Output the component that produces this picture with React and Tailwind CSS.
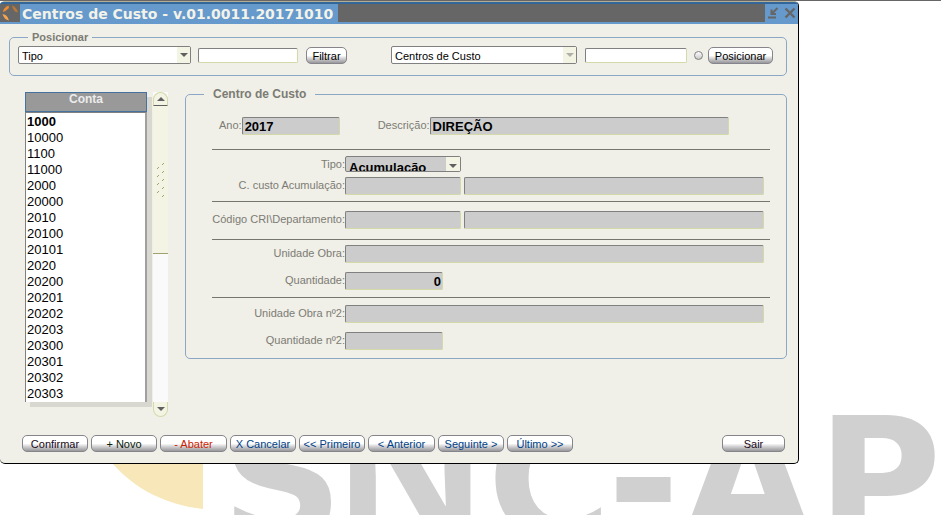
import React from "react";

const accounts = [
  "1000", "10000", "1100", "11000", "2000", "20000", "2010", "20100", "20101",
  "2020", "20200", "20201", "20202", "20203", "20300", "20301", "20302", "20303",
];

const actions = [
  { label: "Confirmar", style: "w-[66px] text-[#1a0a1a]" },
  { label: "+ Novo", style: "w-[66px] text-[#0a200a]" },
  { label: "- Abater", style: "w-[67px] text-[#cc2200]" },
  { label: "X Cancelar", style: "w-[66px] text-[#003f87]" },
  { label: "<< Primeiro", style: "w-[66px] text-[#003f87]" },
  { label: "< Anterior", style: "w-[67px] text-[#003f87]" },
  { label: "Seguinte >", style: "w-[66px] text-[#003f87]" },
  { label: "Último >>", style: "w-[66px] text-[#003f87]" },
];

function Watermark() {
  return (
    <svg
      className="absolute left-0 top-0"
      width="941"
      height="515"
      viewBox="0 0 941 515"
      aria-hidden="true"
    >
      <path d="M203 400V508C166 504 135 488 113 463L90 400Z" fill="#f8e7b9" />
      <g
        fill="#d0d0d0"
        fontFamily="'DejaVu Sans', sans-serif"
        fontWeight="700"
        fontSize="170"
      >
        <text x="221" y="539">S</text>
        <text x="333" y="539" fontFamily="'Open Sans', sans-serif" fontSize="190">N</text>
        <text x="487" y="539">C</text>
        <text x="607" y="539" fontSize="176">-</text>
        <text x="682" y="539">A</text>
        <text x="817" y="538">P</text>
      </g>
    </svg>
  );
}

function Button({ children, className = "" }) {
  return (
    <button
      type="button"
      className={`flex h-[17px] shrink-0 items-center justify-center whitespace-nowrap rounded-[5px] border border-[#85858b] bg-linear-to-b from-white from-50% via-[#d2d2d4] via-70% to-[#98989c] pt-px text-[11px] leading-[14px] ${className}`}
    >
      {children}
    </button>
  );
}

function Arrow({ className = "" }) {
  return (
    <svg width="8" height="4" viewBox="0 0 8 4" className={className} aria-hidden="true">
      <path d="M0 0H8L4 4Z" fill="currentColor" />
    </svg>
  );
}

function Select({ label, value, className = "", disabled = false }) {
  return (
    <div className={`relative ${className}`}>
      <select
        aria-label={label}
        disabled={disabled}
        className="block h-[18px] w-full appearance-none rounded-xs border border-[#808080] bg-white pl-[3px] pt-px text-[11px] leading-4 text-black opacity-100"
      >
        <option>{value}</option>
      </select>
      <span
        className={`pointer-events-none absolute inset-y-px right-px flex w-[13px] items-center justify-center bg-[#f4f4e4] ${disabled ? "text-[#b0b0a8]" : "text-[#606060]"}`}
      >
        <Arrow />
      </span>
    </div>
  );
}

function Field({ id, value = "", className = "" }) {
  return (
    <input
      id={id}
      aria-label={id}
      readOnly
      defaultValue={value}
      className={`h-[18px] min-w-0 rounded-[2px] border border-b-[#d3d9a9] border-l-[#808080] border-r-[#d3d9a9] border-t-[#808080] bg-[#ccc] pl-[2px] pr-px pt-px text-[13px] font-bold leading-4 text-black outline-none ${className}`}
    />
  );
}

function Row({ label, id, className = "", children }) {
  return (
    <div className={`flex pr-[6px] ${className}`}>
      <label
        htmlFor={id}
        className="h-[18px] w-[133px] shrink-0 whitespace-nowrap text-right text-[11px] leading-4 text-[#7c7c74]"
      >
        {label}
      </label>
      {children}
    </div>
  );
}

function Rule({ className = "" }) {
  return <hr className={`border-t border-[#76766f] ${className}`} />;
}

function TitleBar() {
  return (
    <header className="flex h-[22px] rounded-t-[3px] border-b-2 border-t-2 border-b-[#6699cc] border-t-[#336699] bg-[#666]">
      <svg width="20" height="18" viewBox="0 0 20 18" className="shrink-0 bg-[#666]" aria-hidden="true">
        <path d="M3 8Q3 4 8.500 1.500L9 4Q6 7 3 8Z" fill="#f08c2e" />
        <path d="M12 1.500Q16.500 3 18 8.500L15 7.500Q12.500 5 12 1.500Z" fill="#b87838" />
        <path d="M2.500 10L5.500 11Q8.500 13 9 16.500Q4 15.500 2.500 10Z" fill="#f7a550" />
      </svg>
      <h1 className="overflow-hidden whitespace-nowrap bg-[#6699cc] pl-[2px] pr-[5px] font-['DejaVu_Sans',sans-serif] text-[14px] font-bold leading-[20px] text-[#f3f3e9]">
        Centros de Custo - v.01.0011.20171010
      </h1>
      <div className="ml-auto flex w-[33px] items-center justify-around bg-[#6699cc] text-[#666]">
        <button type="button" aria-label="Minimizar">
          <svg width="12" height="12" viewBox="0 0 12 12" fill="none" stroke="currentColor" strokeWidth="2">
            <path d="M10.500 1L5 6.500M4.500 2.500V7H9M1 10.500H9" />
          </svg>
        </button>
        <button type="button" aria-label="Fechar">
          <svg width="12" height="12" viewBox="0 0 12 12" fill="none" stroke="currentColor" strokeWidth="2.400">
            <path d="M1.500 1.500L10.500 10.500M10.500 1.500L1.500 10.500" />
          </svg>
        </button>
      </div>
    </header>
  );
}

function SearchPanel() {
  const box =
    "h-[15px] min-w-0 rounded-[2px] border border-b-[#d3d9a9] border-l-[#808080] border-r-[#d3d9a9] border-t-[#808080] bg-white px-1 text-[11px] outline-none";
  return (
    <fieldset className="ml-[9px] mr-[11px] mt-[5px] min-w-0 rounded-[5px] border border-[#8aa8c6]">
      <legend className="ml-[18px] h-4 px-1 text-[11px] font-bold leading-4 text-[#7c7c74]">
        Posicionar
      </legend>
      <div className="flex items-center pb-[11px] pl-2 pr-[13px] pt-px">
        <Select label="Tipo" value="Tipo" className="w-[173px]" />
        <input aria-label="Valor do filtro" className={`ml-[7px] w-[100px] ${box}`} />
        <Button className="ml-2 w-[41px] text-black">Filtrar</Button>
        <Select
          label="Centros de Custo"
          value="Centros de Custo"
          className="ml-auto w-[186px]"
          disabled
        />
        <input aria-label="Valor a posicionar" className={`ml-2 w-[102px] ${box}`} />
        <input
          type="radio"
          aria-label="Ativar posicionamento"
          className="ml-[7px] h-[9px] w-[9px] appearance-none rounded-full border border-[#808080] bg-linear-to-b from-white to-[#c8c8c8]"
        />
        <Button className="ml-[5px] w-[65px] text-black">Posicionar</Button>
      </div>
    </fieldset>
  );
}

function AccountList() {
  return (
    <div className="mt-[6px] flex self-start">
      <table className="w-[122px] border-separate border-spacing-0 shadow-[5px_5px_0_#d8d8d0]">
        <thead>
          <tr>
            <th className="h-5 border border-[#47719f] bg-[#999] p-0 pb-[6px] text-center text-[12px] font-bold leading-3 text-[#ececec]">
              Conta
            </th>
          </tr>
        </thead>
        <tbody>
          {accounts.map((a, i) => (
            <tr key={a}>
              <td
                className={`h-4 border-l border-r-2 border-l-[#808080] border-r-[#a0a0a0] bg-white p-0 pl-px text-[13px] leading-4 text-black ${i === 0 ? "border-t border-t-[#808080] pt-px font-bold" : ""}`}
              >
                {a}
              </td>
            </tr>
          ))}
        </tbody>
      </table>
      <div className="ml-[6px] flex w-[15px] flex-col bg-[#fafafa]">
        <button
          type="button"
          aria-label="Subir"
          className="flex h-[14px] items-center justify-center rounded-t-full border border-b-[#606060] border-l-[#d3d9a9] border-r-[#d3d9a9] border-t-[#d3d9a9] bg-[#f4f4e4] text-[#606060]"
        >
          <Arrow className="rotate-180" />
        </button>
        <div className="flex h-[148px] items-center justify-center border-b border-[#a0a070] bg-[#f4f4e4]">
          <svg width="8" height="36" viewBox="0 0 8 36" fill="none" stroke="#a0a070" aria-hidden="true">
            <path d="M0 7l2-2M5 3l2-2M0 15l2-2M5 11l2-2M0 23l2-2M5 19l2-2M0 31l2-2M5 27l2-2M5 35l2-2" />
          </svg>
        </div>
        <div className="flex-1" />
        <button
          type="button"
          aria-label="Descer"
          className="-mb-[15px] flex h-[15px] items-center justify-center rounded-b-full border border-t-0 border-[#d3d9a9] bg-[#f4f4e4] text-[#606060]"
        >
          <Arrow />
        </button>
      </div>
    </div>
  );
}

function DetailPanel() {
  return (
    <fieldset className="ml-[17px] min-w-0 flex-1 self-start rounded-[5px] border border-[#8aa8c6]">
      <legend className="ml-[18px] h-4 px-[9px] text-[12px] font-bold leading-4 text-[#7c7c74]">
        Centro de Custo
      </legend>
      <div className="pb-2 pl-[26px] pr-4 pt-[15px]">
        <div className="flex pl-[7px] text-[11px] leading-4 text-[#7c7c74]">
          <label htmlFor="ano">Ano:</label>
          <Field id="ano" value="2017" className="w-[98px]" />
          <label htmlFor="descricao" className="ml-[38px] whitespace-nowrap">
            Descrição:
          </label>
          <Field id="descricao" value="DIREÇÃO" className="mr-[41px] flex-1" />
        </div>
        <Rule className="mt-[14px]" />
        <Row label="Tipo:" id="tipo" className="mt-[6px] h-4">
          <div className="relative h-4 w-[116px]">
            <select
              id="tipo"
              className="block h-4 w-full appearance-none overflow-hidden rounded-xs border border-[#808080] bg-[#ccc] pl-[3px] pt-[3px] text-[13px] font-bold leading-4 text-black"
            >
              <option>Acumulação</option>
            </select>
            <span className="pointer-events-none absolute inset-y-px right-px flex w-[14px] items-center justify-center bg-[#f4f4e4] pt-1 text-[#606060]">
              <Arrow />
            </span>
          </div>
        </Row>
        <Row label="C. custo Acumulação:" id="acumulacao" className="mt-[5px]">
          <Field id="acumulacao" className="w-[116px]" />
          <Field id="acumulacao-descricao" className="ml-[3px] flex-1" />
        </Row>
        <Rule className="mt-[6px]" />
        <Row label="Código CRI\Departamento:" id="departamento" className="mt-[9px]">
          <Field id="departamento" className="w-[116px]" />
          <Field id="departamento-descricao" className="ml-[3px] flex-1" />
        </Row>
        <Rule className="mt-[10px]" />
        <Row label="Unidade Obra:" id="unidade" className="mt-[5px]">
          <Field id="unidade" className="flex-1" />
        </Row>
        <Row label="Quantidade:" id="quantidade" className="mt-[9px]">
          <Field id="quantidade" value="0" className="w-[98px] text-right" />
        </Row>
        <Rule className="mt-[7px]" />
        <Row label="Unidade Obra nº2:" id="unidade2" className="mt-[7px]">
          <Field id="unidade2" className="flex-1" />
        </Row>
        <Row label="Quantidade nº2:" id="quantidade2" className="mt-[9px]">
          <Field id="quantidade2" className="w-[98px]" />
        </Row>
      </div>
    </fieldset>
  );
}

export default function App() {
  return (
    <div className="relative min-h-screen overflow-hidden border-t border-[#666] bg-white font-['Liberation_Sans',Arial,sans-serif]">
      <Watermark />
      <main className="relative w-full max-w-[799px] rounded-[5px] border-b border-r border-t border-b-black border-r-black border-t-[#b5ad94] bg-[#f0efe8]">
        <TitleBar />
        <SearchPanel />
        <div className="mt-[10px] flex pl-[25px] pr-[11px]">
          <AccountList />
          <DetailPanel />
        </div>
        <footer className="mt-[33px] flex gap-[3px] pb-[11px] pl-[22px] pr-[13px]">
          {actions.map((a) => (
            <Button key={a.label} className={a.style}>
              {a.label}
            </Button>
          ))}
          <Button className="ml-auto w-[63px] text-[#1a0a1a]">Sair</Button>
        </footer>
      </main>
    </div>
  );
}
